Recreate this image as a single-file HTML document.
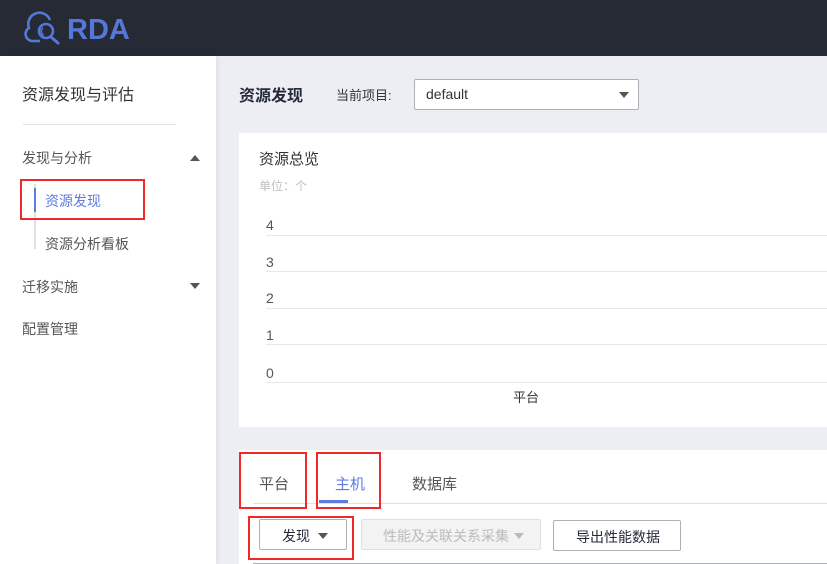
<!DOCTYPE html>
<html><head><meta charset="utf-8"><style>
*{margin:0;padding:0;box-sizing:border-box}
body{width:827px;height:564px;overflow:hidden;background:#eceef4;font-family:"Liberation Sans","Noto Sans CJK SC",sans-serif;position:relative;color:#252b3a}
.a{position:absolute}
.hdr{left:0;top:0;width:827px;height:56px;background:#262a35}
.side{left:0;top:56px;width:216px;height:508px;background:#fff;box-shadow:2px 0 4px rgba(0,0,0,.06)}
.t{position:absolute;white-space:nowrap}
.red{position:absolute;border:2px solid #f0282a}
.line{position:absolute;left:266px;width:561px;height:1px;background:#e6e7eb}
.num{position:absolute;left:266px;font-size:14px;color:#555}
.tri{position:absolute;width:0;height:0;border-left:5px solid transparent;border-right:5px solid transparent}
</style></head><body>
<div class="a hdr">
<svg class="a" style="left:0;top:0" width="150" height="56" viewBox="0 0 150 56">
<path d="M33 41 A7 7 0 0 1 29 28 A11 11 0 0 1 50 20" fill="none" stroke="#5578d8" stroke-width="2.6"/>
<path d="M33 41 L40 41" fill="none" stroke="#5578d8" stroke-width="2.6"/>
<circle cx="46" cy="31" r="7" fill="none" stroke="#5578d8" stroke-width="2.6"/>
<path d="M43 28 A4 4 0 0 0 44 35" fill="none" stroke="#5578d8" stroke-width="1.5"/>
<path d="M51 37 L58 43" stroke="#5578d8" stroke-width="3" stroke-linecap="round"/>
<text x="67" y="39" font-family="Liberation Sans" font-size="29" fill="#5578d8" font-weight="bold">RDA</text>
</svg></div>
<div class="a side">
<div class="t" style="left:22px;top:25px;font-size:16px;color:#333">资源发现与评估</div>
<div class="a" style="left:23px;top:68px;width:153px;height:1px;background:#dfe1e6"></div>
<div class="t" style="left:22px;top:92px;font-size:14px;color:#555">发现与分析</div>
<div class="tri" style="left:190px;top:99px;border-bottom:6px solid #555"></div>
<div class="a" style="left:34px;top:128px;width:2px;height:65px;background:#dfe1e6"></div>
<div class="a" style="left:34px;top:132px;width:2px;height:24px;background:#5e7ce0"></div>
<div class="t" style="left:45px;top:135px;font-size:14px;color:#5e7ce0">资源发现</div>
<div class="red" style="left:20px;top:123px;width:125px;height:41px"></div>
<div class="t" style="left:45px;top:178px;font-size:14px;color:#555">资源分析看板</div>
<div class="t" style="left:22px;top:221px;font-size:14px;color:#555">迁移实施</div>
<div class="tri" style="left:190px;top:227px;border-top:6px solid #555"></div>
<div class="t" style="left:22px;top:263px;font-size:14px;color:#555">配置管理</div>
</div>
<div class="t" style="left:239px;top:82px;font-size:16px;font-weight:bold;color:#252b3a">资源发现</div>
<div class="t" style="left:336px;top:85px;font-size:13px;color:#333">当前项目:</div>
<div class="a" style="left:414px;top:79px;width:225px;height:31px;background:#fff;border:1px solid #adb0b8;border-radius:2px"></div>
<div class="t" style="left:426px;top:86px;font-size:14px;color:#333">default</div>
<div class="tri" style="left:619px;top:92px;border-top:6px solid #555"></div>
<div class="a" style="left:239px;top:133px;width:588px;height:294px;background:#fff"></div>
<div class="t" style="left:259px;top:148px;font-size:15px;color:#333">资源总览</div>
<div class="t" style="left:259px;top:177px;font-size:12px;color:#c0c0c0">单位：个</div>
<div class="num" style="top:217px">4</div><div class="line" style="top:235px"></div>
<div class="num" style="top:254px">3</div><div class="line" style="top:271px"></div>
<div class="num" style="top:290px">2</div><div class="line" style="top:308px"></div>
<div class="num" style="top:327px">1</div><div class="line" style="top:344px"></div>
<div class="num" style="top:365px">0</div><div class="line" style="top:382px"></div>
<div class="t" style="left:513px;top:387px;font-size:13px;color:#333">平台</div>
<div class="a" style="left:239px;top:450px;width:588px;height:114px;background:#fff"></div>
<div class="a" style="left:253px;top:503px;width:574px;height:1px;background:#dfe1e6"></div>
<div class="t" style="left:259px;top:473px;font-size:15px;color:#555">平台</div>
<div class="t" style="left:335px;top:473px;font-size:15px;color:#5e7ce0">主机</div>
<div class="a" style="left:319px;top:500px;width:29px;height:3px;background:#5e7ce0"></div>
<div class="t" style="left:412px;top:473px;font-size:15px;color:#555">数据库</div>
<div class="red" style="left:239px;top:452px;width:68px;height:57px"></div>
<div class="red" style="left:316px;top:452px;width:65px;height:57px"></div>
<div class="a" style="left:259px;top:519px;width:88px;height:31px;border:1px solid #adb0b8;border-radius:2px;background:#fff"></div>
<div class="t" style="left:282px;top:526px;font-size:14px;color:#252b3a">发现</div>
<div class="tri" style="left:318px;top:533px;border-top:6px solid #555"></div>
<div class="red" style="left:248px;top:516px;width:106px;height:44px"></div>
<div class="a" style="left:361px;top:519px;width:180px;height:31px;border:1px solid #dfe1e6;border-radius:2px;background:#f3f3f4"></div>
<div class="t" style="left:383px;top:526px;font-size:14px;color:#bbb">性能及关联关系采集</div>
<div class="tri" style="left:514px;top:533px;border-top:6px solid #bbb"></div>
<div class="a" style="left:553px;top:520px;width:128px;height:31px;border:1px solid #adb0b8;border-radius:2px;background:#fff"></div>
<div class="t" style="left:576px;top:527px;font-size:14px;color:#252b3a">导出性能数据</div>
<div class="a" style="left:253px;top:563px;width:574px;height:1px;background:#adb0b8"></div>
</body></html>
